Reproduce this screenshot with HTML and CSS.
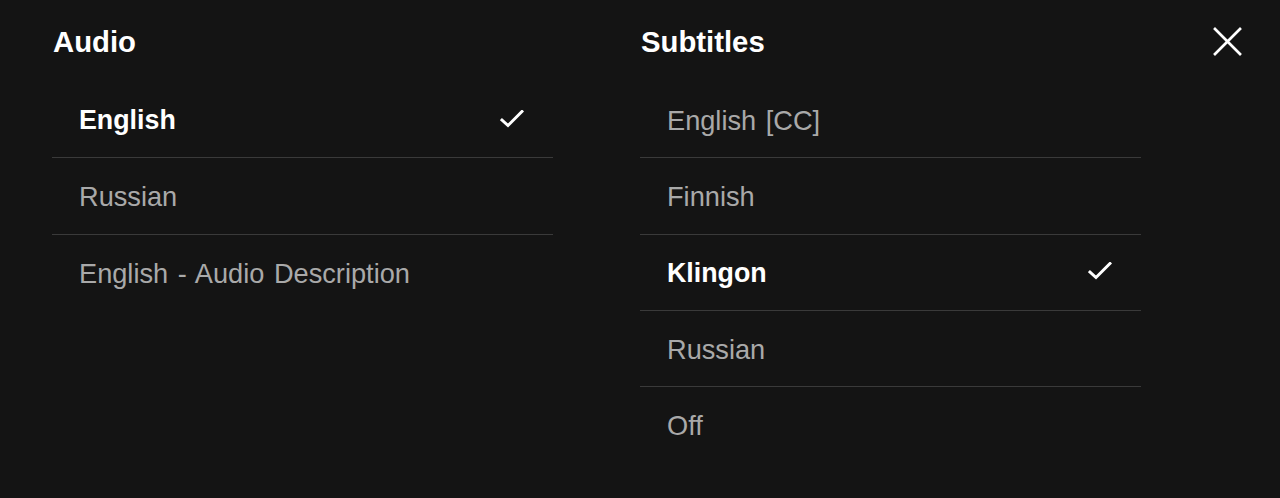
FILE: index.html
```html
<!DOCTYPE html>
<html>
<head>
<meta charset="utf-8">
<link rel="stylesheet" href="styles.css">
</head>
<body>
<div class="panel">
  <section class="col">
    <h2 class="heading">Audio</h2>
    <ul class="list">
      <li class="item selected"><span>English</span><svg class="check" viewBox="0 0 24 18"><path d="M2 10 L8 15.5 L22 1.5" /></svg></li>
      <li class="item"><span>Russian</span></li>
      <li class="item last"><span>English - Audio Description</span></li>
    </ul>
  </section>
  <section class="col">
    <h2 class="heading">Subtitles</h2>
    <ul class="list">
      <li class="item"><span>English [CC]</span></li>
      <li class="item"><span>Finnish</span></li>
      <li class="item selected"><span>Klingon</span><svg class="check" viewBox="0 0 24 18"><path d="M2 10 L8 15.5 L22 1.5" /></svg></li>
      <li class="item"><span>Russian</span></li>
      <li class="item last"><span>Off</span></li>
    </ul>
  </section>
  <button class="close" aria-label="Close"><svg viewBox="0 0 28 28"><path d="M1 1 L27 27 M27 1 L1 27" /></svg></button>
</div>
</body>
</html>
```
FILE: styles.css
```css
html, body {
  margin: 0;
  padding: 0;
  background: #141414;
  height: 100%;
}
body {
  font-family: "Liberation Sans", Arial, sans-serif;
  color: #fff;
  overflow: hidden;
}
.panel {
  position: relative;
  display: flex;
  gap: 87px;
  padding: 26px 0 0 52px;
}
.col {
  width: 501px;
}
.heading {
  margin: 0 0 25px 1px;
  font-size: 29.3px;
  line-height: 31px;
  font-weight: bold;
  color: #fff;
}
.list {
  list-style: none;
  margin: 0;
  padding: 0;
}
.item {
  display: flex;
  align-items: center;
  justify-content: space-between;
  box-sizing: border-box;
  height: 76.33px;
  border-bottom: 1px solid #3a3a3a;
  padding: 2px 30px 0 27px;
  font-size: 27.2px;
  word-spacing: 2px;
  color: #a9a9a9;
}
.item.last {
  border-bottom: none;
}
.item.selected {
  color: #fff;
  font-weight: bold;
  font-size: 26.8px;
}
.check {
  width: 24px;
  height: 18px;
  margin-top: -4px;
  margin-right: -1px;
}
.check path {
  fill: none;
  stroke: #fff;
  stroke-width: 3;
  stroke-linecap: square;
}
.close {
  position: absolute;
  top: 27px;
  right: 38px;
  width: 29px;
  height: 29px;
  padding: 0;
  border: none;
  background: none;
}
.close svg {
  width: 29px;
  height: 29px;
  display: block;
}
.close path {
  fill: none;
  stroke: #fff;
  stroke-width: 2.6;
}
```
